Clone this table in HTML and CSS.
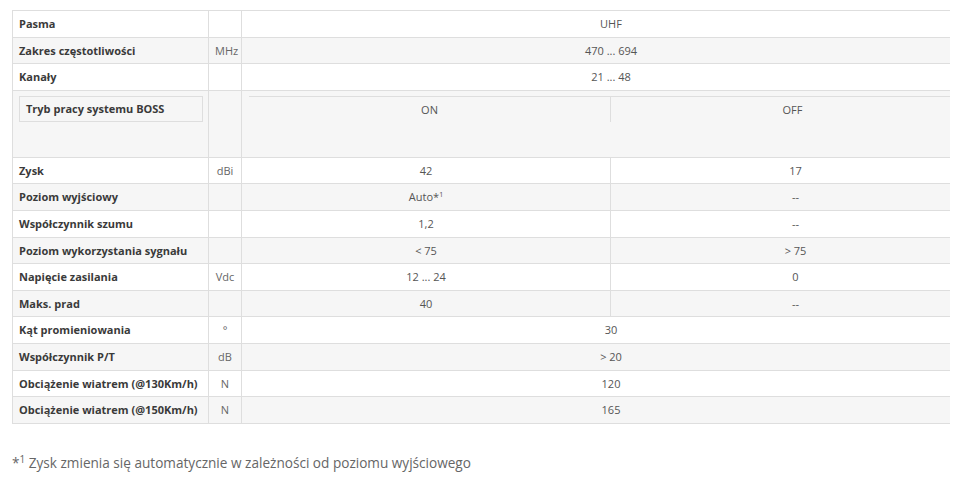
FILE: index.html
```html
<!DOCTYPE html>
<html lang="pl">
<head>
<meta charset="utf-8">
<title>Dane techniczne</title>
<link rel="stylesheet" href="styles.css">
</head>
<body>
<div class="wrap">
  <table class="spec">
    <colgroup>
      <col class="c-label">
      <col class="c-unit">
      <col class="c-on">
      <col class="c-off">
    </colgroup>
    <tbody>
      <tr><th>Pasma</th><td class="unit"></td><td class="val" colspan="2">UHF</td></tr>
      <tr class="alt"><th>Zakres częstotliwości</th><td class="unit">MHz</td><td class="val" colspan="2">470 ... 694</td></tr>
      <tr><th>Kanały</th><td class="unit"></td><td class="val" colspan="2">21 ... 48</td></tr>
      <tr class="alt boss">
        <th class="boss-label"><div class="boss-box">Tryb pracy systemu BOSS</div></th>
        <td class="unit"></td>
        <td class="boss-vals" colspan="2">
          <div class="mode">
            <div class="mode-on">ON</div>
            <div class="mode-off">OFF</div>
          </div>
        </td>
      </tr>
      <tr><th>Zysk</th><td class="unit">dBi</td><td class="val">42</td><td class="val">17</td></tr>
      <tr class="alt"><th>Poziom wyjściowy</th><td class="unit"></td><td class="val">Auto*<sup>1</sup></td><td class="val">--</td></tr>
      <tr><th>Współczynnik szumu</th><td class="unit"></td><td class="val">1,2</td><td class="val">--</td></tr>
      <tr class="alt"><th>Poziom wykorzystania sygnału</th><td class="unit"></td><td class="val">&lt; 75</td><td class="val">&gt; 75</td></tr>
      <tr><th>Napięcie zasilania</th><td class="unit">Vdc</td><td class="val">12 ... 24</td><td class="val">0</td></tr>
      <tr class="alt"><th>Maks. prad</th><td class="unit"></td><td class="val">40</td><td class="val">--</td></tr>
      <tr><th>Kąt promieniowania</th><td class="unit">°</td><td class="val" colspan="2">30</td></tr>
      <tr class="alt"><th>Współczynnik P/T</th><td class="unit">dB</td><td class="val" colspan="2">&gt; 20</td></tr>
      <tr><th>Obciążenie wiatrem (@130Km/h)</th><td class="unit">N</td><td class="val" colspan="2">120</td></tr>
      <tr class="alt"><th>Obciążenie wiatrem (@150Km/h)</th><td class="unit">N</td><td class="val" colspan="2">165</td></tr>
    </tbody>
  </table>
</div>
<p class="note">*<sup>1</sup> Zysk zmienia się automatycznie w zależności od poziomu wyjściowego</p>
</body>
</html>
```

FILE: styles.css
```css
html, body {
  margin: 0;
  padding: 0;
  background: #ffffff;
}

body {
  font-family: "Open Sans", "Liberation Sans", sans-serif;
  color: #555555;
}

.wrap {
  margin: 10px 0 0 12px;
  width: 938px;
  overflow: hidden;
}

.spec {
  border-collapse: collapse;
  table-layout: fixed;
  width: 968px;
  font-size: 11px;
  line-height: 15.6px;
}

.c-label { width: 196px; }
.c-unit { width: 33px; }
.c-on { width: 369px; }
.c-off { width: 370px; }

.spec th,
.spec td {
  border: 1px solid #dedede;
  padding: 5px 6px;
  height: 15.6px;
  vertical-align: middle;
}

.spec th {
  text-align: left;
  font-weight: 700;
  color: #3a3a3a;
  white-space: nowrap;
}

.spec tr.alt th,
.spec tr.alt td {
  background: #f6f6f6;
}

.spec .unit {
  text-align: center;
  color: #666666;
}

.spec .val {
  text-align: center;
  color: #555555;
}

.spec sup {
  font-size: 7px;
  line-height: 0;
  vertical-align: 4px;
}

.spec .boss-label,
.spec .boss-vals {
  padding: 5px 6px 35px 6px;
  vertical-align: top;
}

.spec .boss-vals {
  padding-left: 7px;
}

.boss-box {
  border: 1px solid #dedede;
  padding: 4px 6px;
  line-height: 16px;
  margin-right: -1px;
}

.mode {
  display: flex;
  border-top: 1px solid #dedede;
  line-height: 16px;
}

.mode-on {
  width: 361px;
  flex: none;
  padding: 5px 0 4px;
  text-align: center;
  border-right: 1px solid #dedede;
}

.mode-off {
  flex: 1;
  padding: 5px 0 4px;
  text-align: center;
}

.note {
  margin: 29px 0 0 12px;
  font-size: 13.6px;
  line-height: 20px;
  color: #666666;
}

.note sup {
  font-size: 10px;
  line-height: 0;
  vertical-align: 5px;
}
```
